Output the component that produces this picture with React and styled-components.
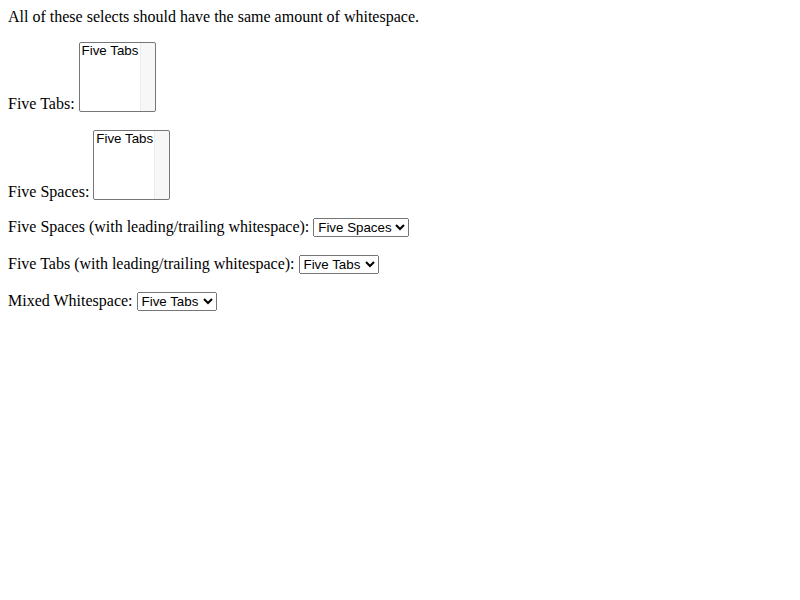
import styled, { createGlobalStyle } from 'styled-components';

const GlobalStyle = createGlobalStyle`
    body {
        margin: 8px;
        font-family: "Liberation Serif", "Times New Roman", serif;
        font-size: 16px;
        color: #000;
        background: #fff;
    }
`

const Intro = styled.p`
    margin: 0 0 16px;
`

const Row = styled.p`
    margin: 0 0 ${p => p.$after}px;
`

const Picker = styled.select`
    font-family: "Liberation Sans", Arial, sans-serif;
    font-size: 13.333px;
`

// listbox keeps an empty scrollbar gutter on the right
const ListPicker = styled(Picker)`
    width: 77px;
    background: linear-gradient(to left, #f7f7f7 14px, #ebebeb 14px, #ebebeb 15px, #fff 15px);
`

const rows = [
    { label: 'Five Tabs:', option: 'Five Tabs', list: true, after: 17 },
    { label: 'Five Spaces:', option: 'Five Tabs', list: true, after: 17 },
    { label: 'Five Spaces (with leading/trailing whitespace):', option: 'Five Spaces', after: 18 },
    { label: 'Five Tabs (with leading/trailing whitespace):', option: 'Five Tabs', after: 18 },
    { label: 'Mixed Whitespace:', option: 'Five Tabs', after: 16 },
];

const App = () => {
    return (
        <>
            <GlobalStyle />
            <Intro>All of these selects should have the same amount of whitespace.</Intro>
            {rows.map((r, i) => (
                <Row key={i} $after={r.after}>
                    {r.label}{' '}
                    {r.list
                        ? <ListPicker size={4}><option>{r.option}</option></ListPicker>
                        : <Picker defaultValue={r.option}><option>{r.option}</option></Picker>}
                </Row>
            ))}
        </>
    );
}

export default App;
